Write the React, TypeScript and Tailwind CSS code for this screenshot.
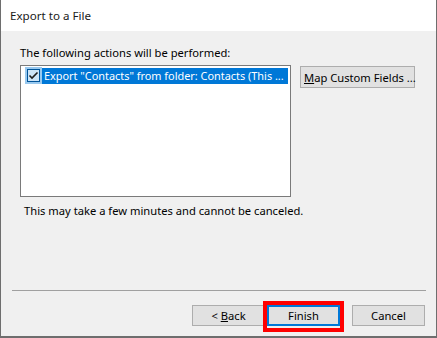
import React from "react";

const font = { fontFamily: '"Noto Sans", "Open Sans", sans-serif' };

const CheckIcon = () => (
  <svg width="13" height="13" viewBox="0 0 13 13" className="block">
    <rect x="0.5" y="0.5" width="12" height="12" fill="#cce4f7" stroke="#005499" />
    <path d="M2.5 6.5 L5 9 L10.5 3.5" fill="none" stroke="#1c1c1c" strokeWidth="1.6" />
  </svg>
);

const DialogButton: React.FC<{ children: React.ReactNode; className?: string }> = ({ children, className = "" }) => (
  <button className={`w-[73px] h-[21px] bg-[#e1e1e1] border border-[#adadad] text-[11.2px] leading-[15px] text-black flex items-center justify-center whitespace-nowrap ${className}`}>
    {children}
  </button>
);

export default function App() {
  return (
    <div
      className="w-[437px] h-[338px] bg-[#f0f0f0] border-l border-r border-b-2 border-[#6e6e6e] text-black text-[11.2px] leading-[15px] flex flex-col"
      style={font}
    >
      {/* title */}
      <div className="h-[31px] bg-white flex items-center pl-[9px] text-[#1a1a1a] text-[11.6px]">Export to a File</div>

      <div className="pl-[19px] pt-[14px]">
        <div>The following actions will be performed:</div>

        <div className="flex items-start mt-[5px]">
          <div className="w-[271px] h-[132px] bg-white border border-[#7a7a7a] pt-[1px] pl-[4px] pr-[2px]">
            <div className="flex items-center h-[17px]">
              <div className="w-[17px] h-[17px] bg-[#99c9ef] flex items-center justify-center">
                <CheckIcon />
              </div>
              <div className="flex-1 h-[16px] bg-[#0078d7] text-white pl-[2px] whitespace-nowrap overflow-hidden leading-[16px] text-[10.9px]">
                Export "Contacts" from folder: Contacts (This ...
              </div>
            </div>
          </div>
          <button className="ml-[9px] mt-[1px] w-[115px] h-[22px] bg-[#e1e1e1] border border-[#adadad] text-left pl-[3px] leading-[15px] whitespace-nowrap">
            <span className="underline">M</span>ap Custom Fields ...
          </button>
        </div>

        <div className="mt-[6px] pl-[4px]">This may take a few minutes and cannot be canceled.</div>
      </div>

      <div className="mt-[72px] ml-[11px] w-[414px] h-px bg-[#a0a0a0]" />

      <div className="flex items-start mt-[10px] pl-[191px]">
        <DialogButton className="mt-[4px]">
          &lt;&nbsp;<span className="underline">B</span>ack
        </DialogButton>
        <div className="-ml-[2px] w-[81px] h-[31px] border-4 border-[#ff0000] flex">
          <button className="w-[73px] h-[21px] bg-[#e1e1e1] border-2 border-[#0078d7] text-[11.2px] leading-[15px] flex items-center justify-center">
            Finish
          </button>
        </div>
        <DialogButton className="mt-[4px] ml-[8px]">Cancel</DialogButton>
      </div>
    </div>
  );
}
